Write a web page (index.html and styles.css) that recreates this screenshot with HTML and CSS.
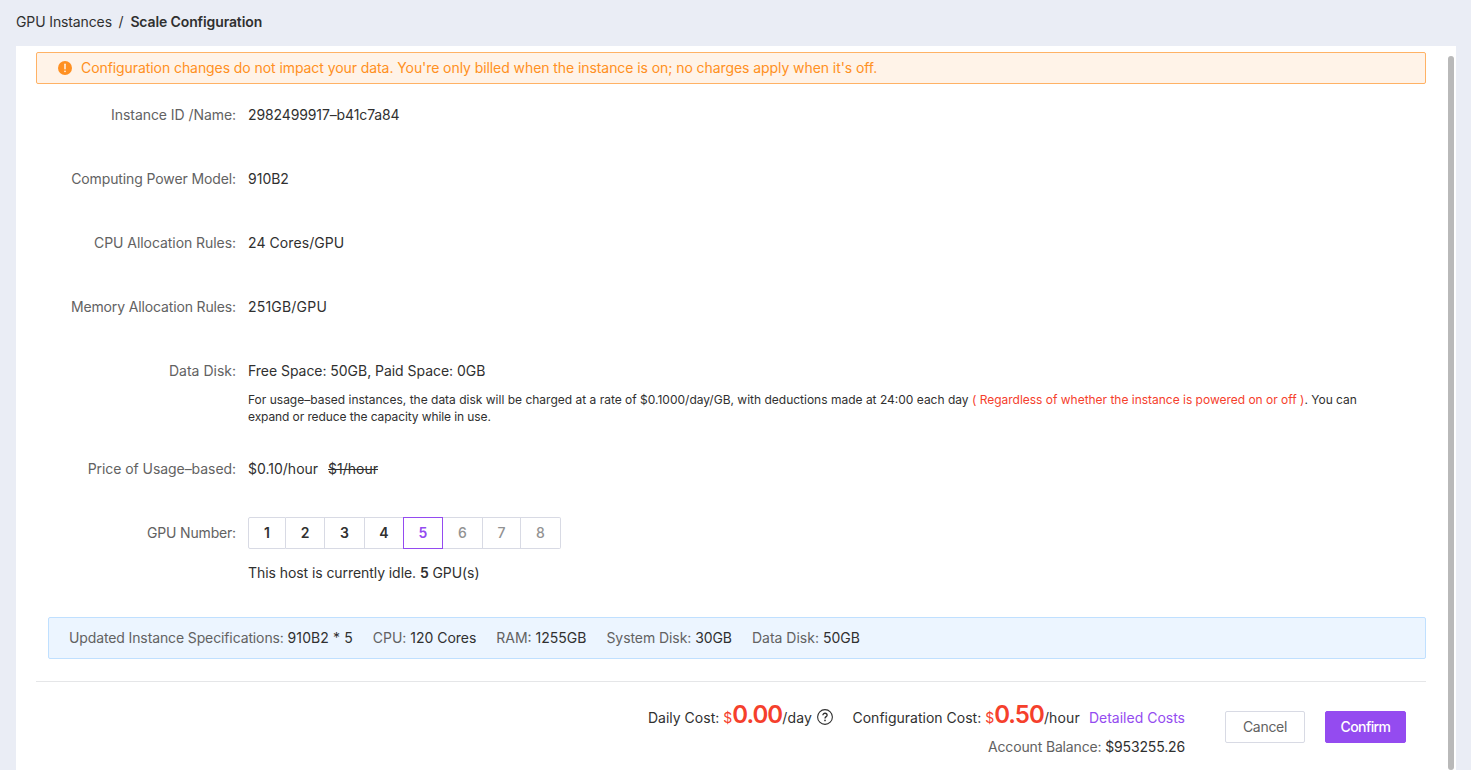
FILE: index.html
```html
<!DOCTYPE html>
<html lang="en">
<head>
<meta charset="utf-8">
<title>Scale Configuration</title>
<link rel="stylesheet" href="styles.css">
</head>
<body>
<nav class="breadcrumb"><span class="crumb">GPU Instances</span><span class="slash">/</span><b class="current">Scale Configuration</b></nav>
<main class="panel">
  <div class="content">
    <div class="alert">
      <svg class="alert-icon" viewBox="0 0 14 14"><circle cx="7" cy="7" r="7" fill="#ff9022"/><path d="M7 3.2v4.6" stroke="#fff3e8" stroke-width="1.5" stroke-linecap="round"/><circle cx="7" cy="10.3" r=".85" fill="#fff3e8"/></svg>
      <span class="alert-text">Configuration changes do not impact your data. You're only billed when the instance is on; no charges apply when it's off.</span>
    </div>
    <section class="form">
      <div class="row"><div class="label l-id">Instance ID /Name:</div><div class="value v-id">2982499917–b41c7a84</div></div>
      <div class="row"><div class="label l-model">Computing Power Model:</div><div class="value">910B2</div></div>
      <div class="row"><div class="label l-cpu">CPU Allocation Rules:</div><div class="value v-cpu">24 Cores/GPU</div></div>
      <div class="row"><div class="label l-mem">Memory Allocation Rules:</div><div class="value v-mem">251GB/GPU</div></div>
      <div class="row row-disk"><div class="label l-disk">Data Disk:</div><div class="value">
        <div class="v-disk">Free Space: 50GB, Paid Space: 0GB</div>
        <p class="note">For usage–based instances, the data disk will be charged at a rate of $0.1000/day/GB, with deductions made at 24:00 each day <span class="warn">( Regardless of whether the instance is powered on or off )</span>. You can<br><span class="note-end">expand or reduce the capacity while in use.</span></p></div></div>
      <div class="row"><div class="label l-price">Price of Usage–based:</div><div class="value"><span class="price">$0.10/hour</span><s class="old">$1/hour</s></div></div>
      <div class="row row-gpu"><div class="label l-gpu">GPU Number:</div><div class="value">
        <div class="gpus"><span class="w38">1</span><span class="w39">2</span><span class="w40">3</span><span class="w39">4</span><span class="w40 active">5</span><span class="w40 off">6</span><span class="w38 off">7</span><span class="w40 off">8</span></div>
        <div class="idle">This host is currently idle. <b>5</b> GPU(s)</div></div></div>
    </section>
    <div class="specs">
      <span class="s1">Updated Instance Specifications: <em>910B2 * 5</em></span>
      <span class="s2">CPU: <em>120 Cores</em></span>
      <span class="s3">RAM: <em>1255GB</em></span>
      <span class="s4">System Disk: <em>30GB</em></span>
      <span class="s5">Data Disk: <em>50GB</em></span>
    </div>
    <footer class="footer">
      <div class="costs">
        <div class="cost-line">
          <span class="c-daily">Daily Cost:</span><span class="cur">$</span><b class="amount">0.00</b><span class="unit-day">/day</span>
          <svg class="help" viewBox="0 0 16 16" fill="none" stroke="#303030"><circle cx="8" cy="8" r="7.4" stroke-width="1.1"/><path d="M5.9 6.3C5.9 3.5 10.1 3.7 10.1 6.2C10.1 7.7 8 7.6 8 9.4" stroke-width="1.3"/><circle cx="8" cy="11.4" r=".85" fill="#303030" stroke="none"/></svg>
          <span class="c-conf">Configuration Cost:</span><span class="cur">$</span><b class="amount">0.50</b><span class="unit-hour">/hour</span>
          <a class="detail">Detailed Costs</a>
        </div>
        <div class="balance">Account Balance: <em>$953255.26</em></div>
      </div>
      <button class="btn cancel">Cancel</button>
      <button class="btn confirm">Confirm</button>
    </footer>
  </div>
  <div class="scroll"></div>
</main>
</body>
</html>
```
FILE: styles.css
```css
* { box-sizing: border-box; }
body { margin: 0; height: 770px; overflow: hidden; background: #eaedf5; color: #303030; font: 14px/32px Inter, "Noto Sans", sans-serif; }
em { font-style: normal; color: #303030; }
b { font-weight: 600; }
span, a, s { white-space: nowrap; }
.breadcrumb { display: flex; height: 46px; padding: 6px 16px 0; letter-spacing: -.12px; }
.slash { margin: 0 7px 0 6.5px; }
.panel { display: flex; justify-content: space-between; height: 724px; width: 1440px; margin-left: 16px; padding: 6px 2px 0 20px; background: #fff; }
.content { width: 1390px; }
.scroll { width: 6px; height: 714px; margin-top: 4px; border-radius: 3px; background: #b9b9b9; }
.alert { display: flex; align-items: center; height: 32px; padding-left: 21px; border: 1px solid #ffb265; border-radius: 2px; background: #fff3e8; color: #ff9022; }
.alert-icon { width: 14px; height: 14px; margin-right: 9px; }
.alert-text { letter-spacing: -.075px; }
.form { padding-top: 15px; }
.row { display: flex; margin-bottom: 32px; }
.label { width: 200px; margin-right: 12px; text-align: right; color: #626262; white-space: nowrap; letter-spacing: -.06px; }
.l-model { letter-spacing: -.11px; }
.l-mem { letter-spacing: -.14px; }
.l-gpu { letter-spacing: -.17px; }
.l-disk { letter-spacing: 0; }
.value { min-height: 32px; white-space: nowrap; }
.v-id { letter-spacing: -.12px; }
.v-cpu { letter-spacing: .08px; }
.v-mem { letter-spacing: .2px; }
.v-disk { letter-spacing: -.04px; }
.row-disk { height: 66px; }
.note { margin: 4px 0 0; font-size: 12px; line-height: 17px; letter-spacing: 0; }
.note-end { letter-spacing: -.1px; }
.warn { color: #f5402c; letter-spacing: -.015px; }
.old { margin-left: 10px; }
.gpus { display: flex; height: 32px; }
.gpus span { height: 32px; line-height: 30px; text-align: center; font-weight: 600; border: 1px solid #d8dae4; border-left-width: 0; }
.gpus span:first-child { border-left-width: 1px; border-radius: 2px 0 0 2px; }
.gpus span:last-child { border-radius: 0 2px 2px 0; }
.gpus .w38 { width: 38px; }
.gpus .w39 { width: 39px; }
.gpus .w40 { width: 40px; }
.gpus .active { color: #944bf0; border: 1px solid #944bf0; margin-left: -1px; }
.gpus .off { color: #929292; font-weight: 500; }
.idle { margin-top: 8px; letter-spacing: -.07px; }
.row-gpu { margin-bottom: 28px; }
.specs { display: flex; gap: 20px; height: 42px; margin-left: 12px; padding-left: 20px; line-height: 40px; border: 1px solid #c0e0ff; border-radius: 2px; background: #ecf5ff; color: #626262; }
.s1 { letter-spacing: -.12px; }
.s1 em { letter-spacing: .1px; }
.s2 { letter-spacing: -.02px; }
.s4 { letter-spacing: -.07px; }
.footer { display: flex; justify-content: flex-end; margin-top: 22px; border-top: 1px solid #e5e6e8; padding: 17px 20px 0 0; }
.costs { width: 548px; margin-right: 40px; text-align: right; }
.cost-line { display: flex; justify-content: flex-end; align-items: baseline; height: 32px; }
.cur { margin-left: 4px; color: #f5402c; }
.amount { color: #f5402c; font-size: 24px; letter-spacing: -.95px; }
.help { width: 16px; height: 16px; margin: 10px 20px 0 4.5px; align-self: flex-start; }
.unit-day, .unit-hour { letter-spacing: .15px; }
.detail { margin-left: 9px; color: #944bf0; }
.balance { margin-top: 3px; line-height: 26px; color: #626262; letter-spacing: -.15px; }
.btn { height: 32px; width: 80px; margin-top: 12px; padding: 0; border: 1px solid #d8dae4; border-radius: 2px; background: #fff; color: #626262; font: 14px/30px Inter, sans-serif; letter-spacing: -.3px; }
.confirm { width: 81px; margin-left: 20px; border-color: #944bf0; background: #944bf0; color: #fff; font-weight: 500; letter-spacing: -.6px; }
```
